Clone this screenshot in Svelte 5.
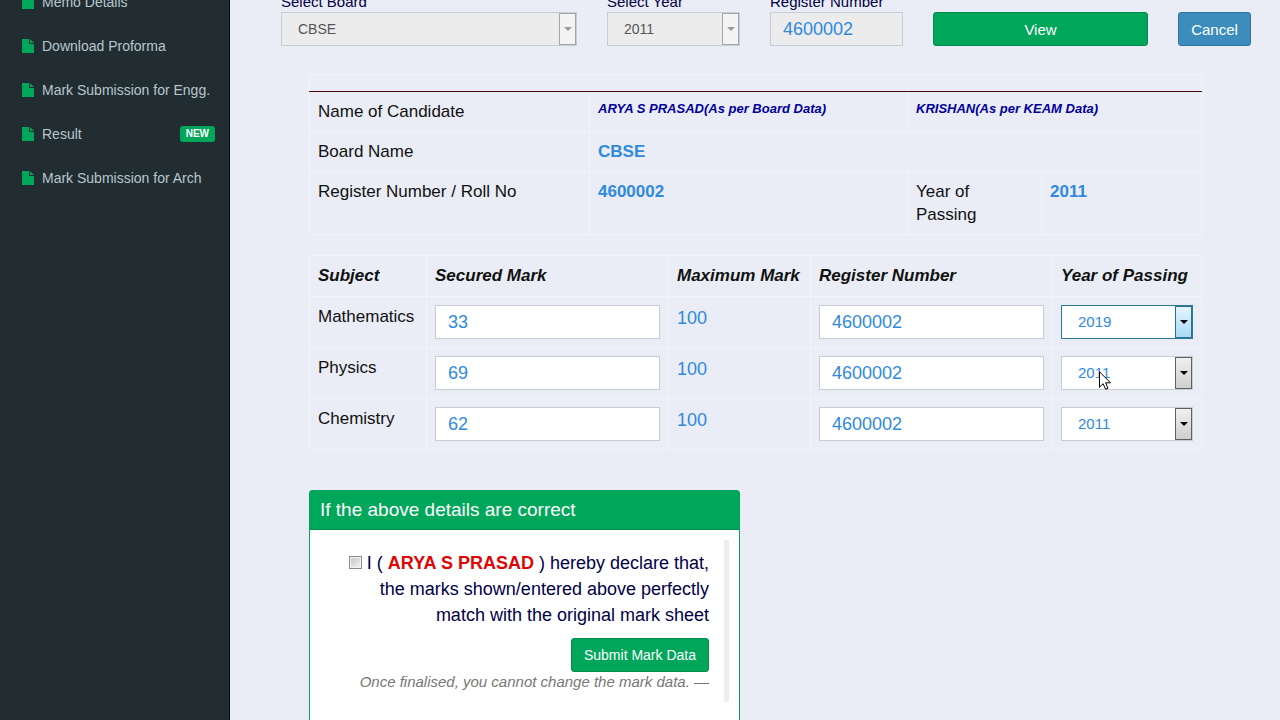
<script lang="ts">
  const menu = [
    { label: 'Memo Details' },
    { label: 'Download Proforma' },
    { label: 'Mark Submission for Engg.' },
    { label: 'Result', badge: 'NEW' },
    { label: 'Mark Submission for Arch' },
  ];

  const years = ['2011', '2012', '2013', '2014', '2015', '2016', '2017', '2018', '2019'];

  let board = $state('CBSE');
  let year = $state('2011');
  let regNo = $state('4600002');
  let declared = $state(false);

  let subjects = $state([
    { name: 'Mathematics', mark: '33', max: 100, regNo: '4600002', year: '2019', active: true },
    { name: 'Physics', mark: '69', max: 100, regNo: '4600002', year: '2011', hover: true },
    { name: 'Chemistry', mark: '62', max: 100, regNo: '4600002', year: '2011' },
  ]);
</script>

{#snippet arrow()}
  <span class="arrow" aria-hidden="true">
    <svg width="8" height="4" viewBox="0 0 8 4"><path d="M0 0h8L4 4z" fill="currentColor" /></svg>
  </span>
{/snippet}

<div class="wrapper">
  <nav class="sidebar">
    <ul>
      {#each menu as item (item.label)}
        <li>
          <a href="#{item.label.toLowerCase().replaceAll(' ', '-')}">
            <svg class="file" width="12" height="14" viewBox="0 0 12 14" aria-hidden="true">
              <path d="M0 0h7v5h5v9H0z" fill="currentColor" />
              <path d="M8 0l4 4H8z" fill="currentColor" />
            </svg>
            <span>{item.label}</span>
            {#if item.badge}<small class="badge">{item.badge}</small>{/if}
          </a>
        </li>
      {/each}
    </ul>
  </nav>

  <main>
    <form class="search" onsubmit={(e) => e.preventDefault()}>
      <div class="field">
        <label for="board">Select Board</label>
        <div class="select disabled">
          <select id="board" bind:value={board} disabled>
            <option>CBSE</option>
          </select>
          {@render arrow()}
        </div>
      </div>
      <div class="field">
        <label for="year">Select Year</label>
        <div class="select disabled">
          <select id="year" bind:value={year} disabled>
            {#each years as y}<option>{y}</option>{/each}
          </select>
          {@render arrow()}
        </div>
      </div>
      <div class="field">
        <label for="regno">Register Number</label>
        <input id="regno" type="text" bind:value={regNo} disabled />
      </div>
      <button class="btn success" type="submit">View</button>
      <button class="btn primary" type="button">Cancel</button>
    </form>

    <div class="details">
      <table class="info">
        <colgroup>
          <col class="w-label" /><col class="w-board" /><col class="w-keam" /><col class="w-year" />
        </colgroup>
        <tbody>
          <tr class="top"><td colspan="4"></td></tr>
          <tr>
            <td>Name of Candidate</td>
            <td class="name">ARYA S PRASAD(As per Board Data)</td>
            <td class="name" colspan="2">KRISHAN(As per KEAM Data)</td>
          </tr>
          <tr>
            <td>Board Name</td>
            <td class="value" colspan="3">{board}</td>
          </tr>
          <tr>
            <td>Register Number / Roll No</td>
            <td class="value">{regNo}</td>
            <td>Year of Passing</td>
            <td class="value">{year}</td>
          </tr>
        </tbody>
      </table>

      <table class="marks">
        <colgroup>
          <col class="w-subject" /><col class="w-input" /><col class="w-max" /><col class="w-input" /><col class="w-passing" />
        </colgroup>
        <thead>
          <tr>
            <th>Subject</th>
            <th>Secured Mark</th>
            <th>Maximum Mark</th>
            <th>Register Number</th>
            <th>Year of Passing</th>
          </tr>
        </thead>
        <tbody>
          {#each subjects as s (s.name)}
            <tr>
              <td>{s.name}</td>
              <td><input type="text" aria-label="{s.name} secured mark" bind:value={s.mark} /></td>
              <td class="max">{s.max}</td>
              <td><input type="text" aria-label="{s.name} register number" bind:value={s.regNo} /></td>
              <td>
                <div class="select" class:active={s.active}>
                  <select aria-label="{s.name} year of passing" bind:value={s.year}>
                    {#each years as y}<option>{y}</option>{/each}
                  </select>
                  {@render arrow()}
                  {#if s.hover}
                    <svg class="pointer" width="12" height="19" viewBox="0 0 12 19" aria-hidden="true">
                      <path d="M.5 .8v15.4l3.6-3.5 2.5 5.5 2.4-1-2.4-5.4h4.9z" fill="#fff" stroke="#000" />
                    </svg>
                  {/if}
                </div>
              </td>
            </tr>
          {/each}
        </tbody>
      </table>

      <section class="box">
        <h3>If the above details are correct</h3>
        <div class="box-body">
          <blockquote>
            <p>
              <input id="declare" type="checkbox" bind:checked={declared} />
              <label for="declare">I ( <b>ARYA S PRASAD</b> ) hereby declare that, the marks shown/entered above perfectly match with the original mark sheet</label>
            </p>
            <button class="btn success submit" type="button">Submit Mark Data</button>
            <small>Once finalised, you cannot change the mark data. —</small>
          </blockquote>
        </div>
      </section>
    </div>
  </main>
</div>

<style>
  :global(body) {
    background: #eaedf5;
    overflow: hidden;
  }

  .wrapper {
    display: flex;
    height: 100vh;
    overflow: hidden;
    font-family: 'Liberation Sans', Arial, sans-serif;
    font-size: 17px;
    line-height: 23px;
    color: #111;
  }

  .wrapper * {
    box-sizing: border-box;
  }

  .sidebar {
    width: 230px;
    flex-shrink: 0;
    background: #222d32;
    border-right: 1px solid #05080a;
  }

  .sidebar ul {
    list-style: none;
    margin: -20px 0 0;
    padding: 0;
  }

  .sidebar a {
    display: flex;
    align-items: center;
    gap: 8px;
    height: 44px;
    padding: 0 14px 0 22px;
    color: #b8c7ce;
    font-size: 14px;
    text-decoration: none;
    white-space: nowrap;
  }

  .file {
    color: #00a65a;
  }

  .badge {
    margin-left: auto;
    padding: 0 6px;
    border-radius: 3px;
    background: #00a65a;
    color: #fff;
    font-size: 10px;
    font-weight: bold;
    line-height: 16px;
  }

  main {
    flex: 1;
    min-width: 0;
  }

  .search {
    display: grid;
    grid-template-columns: 296fr 133fr 133fr 215fr 73fr;
    align-items: end;
    gap: 30px;
    margin-top: -9px;
    padding: 0 29px 0 51px;
  }

  .field label {
    display: block;
    line-height: 21px;
    font-size: 15px;
    color: #000048;
    white-space: nowrap;
  }

  input[type='text'],
  select {
    display: block;
    width: 100%;
    height: 34px;
    margin: 0;
    border: 1px solid #c8ccd6;
    border-radius: 0;
    background: #fff;
    color: #2f8ade;
    font-family: inherit;
    font-size: 18px;
    outline: none;
  }

  input[type='text'] {
    padding: 0 12px;
  }

  select {
    appearance: none;
    padding: 0 24px 2px 16px;
    font-size: 15px;
  }

  input:disabled,
  select:disabled {
    background: #ececec;
    opacity: 1;
  }

  select:disabled {
    padding-bottom: 0;
    color: #555;
    font-size: 14px;
  }

  .select {
    position: relative;
  }

  .arrow {
    position: absolute;
    top: 1px;
    right: 1px;
    bottom: 1px;
    display: flex;
    align-items: center;
    justify-content: center;
    width: 17px;
    border: 1px solid #606060;
    background: linear-gradient(#f0f0f0, #cfcfcf);
    color: #000;
    pointer-events: none;
  }

  .disabled .arrow {
    border-color: #a4a6aa;
    background: #f4f4f4;
    color: #9a9a9a;
  }

  .active select {
    border-color: #2b7a98;
  }

  .active .arrow {
    border-color: #2c7295;
    background: linear-gradient(#e4f4fd, #a8dbf7);
  }

  .pointer {
    position: absolute;
    top: 15px;
    left: 38px;
    pointer-events: none;
  }

  .btn {
    height: 34px;
    padding: 0 12px;
    border: 1px solid;
    border-radius: 3px;
    color: #fff;
    font-family: inherit;
    font-size: 15px;
    cursor: pointer;
  }

  .success {
    background: #00a65a;
    border-color: #008d4c;
  }

  .primary {
    background: #3c8dbc;
    border-color: #2c76a3;
  }

  .details {
    padding: 28px 79px 0;
  }

  table {
    width: 100%;
    margin-bottom: 20px;
    table-layout: fixed;
    border-collapse: collapse;
    border: 1px solid #f1f3f9;
  }

  td,
  th {
    padding: 8px;
    border: 1px solid #f1f3f9;
    text-align: left;
    vertical-align: top;
    white-space: nowrap;
  }

  .info td {
    white-space: normal;
  }

  .info .top td {
    height: 17px;
    padding: 0;
    border-bottom: 1px solid #4c0a0a;
  }

  .info .name {
    color: #00009c;
    font-size: 13px;
    font-weight: bold;
    font-style: italic;
    line-height: 18px;
  }

  .value {
    color: #2f8ade;
    font-weight: bold;
  }

  th {
    height: 41px;
    font-style: italic;
  }

  .max {
    padding-top: 10px;
    color: #2f8ade;
    font-size: 18px;
  }

  /* the columns share the table width in these proportions */
  .w-label {
    width: 280px;
  }

  .w-board {
    width: 318px;
  }

  .w-keam {
    width: 134px;
  }

  .w-year {
    width: 160px;
  }

  .w-subject {
    width: 117px;
  }

  .w-input {
    width: 242px;
  }

  .w-max {
    width: 142px;
  }

  .w-passing {
    width: 149px;
  }

  .box {
    width: 431px;
    max-width: 100%;
    margin-top: 40px;
    border: 1px solid #00a65a;
    border-radius: 3px;
    background: #fff;
  }

  h3 {
    margin: 0;
    padding: 8px 10px;
    border-bottom: 1px solid #008d4c;
    background: #00a65a;
    color: #fff;
    font-size: 19px;
    font-weight: normal;
    line-height: 22px;
  }

  .box-body {
    padding: 10px 10px 40px;
  }

  blockquote {
    display: flex;
    flex-direction: column;
    align-items: flex-end;
    margin: 0;
    padding: 10px 15px;
    border-right: 5px solid #eee;
    text-align: right;
  }

  blockquote p {
    margin: 0 0 10px;
    color: #000048;
    font-size: 18px;
    line-height: 26px;
  }

  blockquote b {
    color: #e00505;
  }

  blockquote input {
    appearance: none;
    width: 13px;
    height: 13px;
    margin: 0;
    border: 1px solid #8a8a8a;
    background: linear-gradient(135deg, #c4c4c4, #f4f4f4);
    box-shadow: inset 0 0 0 1px #f4f4f4;
  }

  blockquote input:checked {
    background: #00a65a;
  }

  .submit {
    font-size: 14px;
  }

  blockquote small {
    color: #777;
    font-size: 15px;
    font-style: italic;
    line-height: 20px;
  }
</style>
